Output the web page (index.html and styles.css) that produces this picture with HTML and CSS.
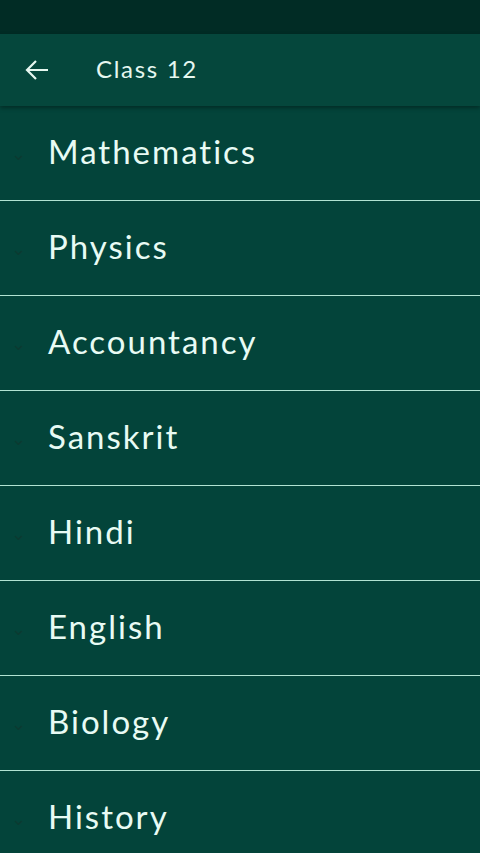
FILE: index.html
```html
<!DOCTYPE html>
<html lang="en">
<head>
  <meta charset="UTF-8" />
  <meta name="viewport" content="width=device-width, initial-scale=1" />
  <title>Class 12</title>
  <link rel="stylesheet" href="styles.css">
</head>
<body>
  <div class="status-bar"></div>
  <header class="app-bar">
    <button class="back-btn" title="Back">
      <svg width="24" height="22" viewBox="0 0 24 22"><path d="M23 11H2M11 2L2 11l9 9" fill="none" stroke="#e6f7f0" stroke-width="2.2"/></svg>
    </button>
    <div class="title">Class 12</div>
  </header>
  <ul class="subjects">
    <li class="subject"><span class="chevron">&#8964;</span><span class="name">Mathematics</span></li>
    <li class="subject"><span class="chevron">&#8964;</span><span class="name">Physics</span></li>
    <li class="subject"><span class="chevron">&#8964;</span><span class="name">Accountancy</span></li>
    <li class="subject"><span class="chevron">&#8964;</span><span class="name">Sanskrit</span></li>
    <li class="subject"><span class="chevron">&#8964;</span><span class="name">Hindi</span></li>
    <li class="subject"><span class="chevron">&#8964;</span><span class="name">English</span></li>
    <li class="subject"><span class="chevron">&#8964;</span><span class="name">Biology</span></li>
    <li class="subject"><span class="chevron">&#8964;</span><span class="name">History</span></li>
  </ul>
</body>
</html>
```

FILE: styles.css
```css
html, body {
  margin: 0;
  padding: 0;
  height: 100%;
  font-family: Lato, "Open Sans", sans-serif;
  background: #03443a;
  overflow: hidden;
}
.status-bar {
  height: 34px;
  background: #012c25;
}
.app-bar {
  height: 72px;
  display: flex;
  align-items: center;
  background: #05473c;
  box-shadow: 0 2px 4px rgba(0,0,0,0.35);
  position: relative;
  z-index: 2;
}
.back-btn {
  background: none;
  border: none;
  padding: 0;
  margin-left: 25px;
  width: 24px;
  height: 22px;
  display: flex;
  cursor: pointer;
}
.title {
  margin-left: 47px;
  margin-top: -3px;
  color: #e6f7f0;
  font-size: 24px;
  letter-spacing: 1.7px;
}
.subjects {
  list-style: none;
  margin: 0;
  padding: 0;
}
.subject {
  height: 94px;
  display: flex;
  align-items: center;
  border-bottom: 1px solid #b2e4d3;
}
.chevron {
  width: 48px;
  text-align: center;
  color: #0b3a31;
  font-size: 18px;
  padding-right: 12px;
  box-sizing: border-box;
}
.name {
  color: #e8fbf4;
  font-size: 33px;
  letter-spacing: 2px;
  margin-top: -4px;
}
```
